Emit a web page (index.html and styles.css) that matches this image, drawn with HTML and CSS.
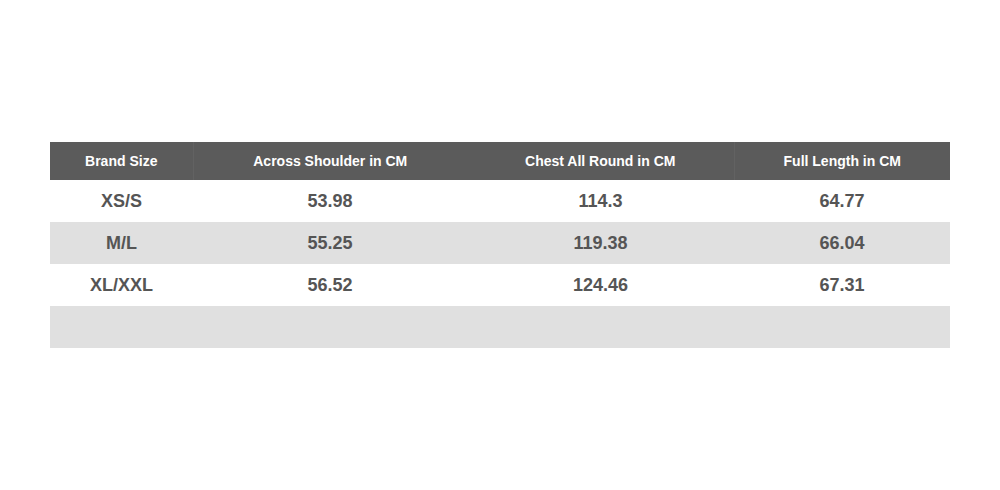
FILE: index.html
```html
<!DOCTYPE html>
<html>
<head>
<meta charset="utf-8">
<link rel="stylesheet" href="styles.css">
</head>
<body>
<div class="page">
<table class="size-table">
  <colgroup>
    <col class="c1"><col class="c2"><col class="c3"><col class="c4">
  </colgroup>
  <thead>
    <tr><th>Brand Size</th><th class="sep">Across Shoulder in CM</th><th>Chest All Round in CM</th><th class="sep">Full Length in CM</th></tr>
  </thead>
  <tbody>
    <tr><td>XS/S</td><td>53.98</td><td>114.3</td><td>64.77</td></tr>
    <tr class="alt"><td>M/L</td><td>55.25</td><td>119.38</td><td>66.04</td></tr>
    <tr><td>XL/XXL</td><td>56.52</td><td>124.46</td><td>67.31</td></tr>
    <tr class="alt"><td></td><td></td><td></td><td></td></tr>
  </tbody>
</table>
</div>
</body>
</html>
```
FILE: styles.css
```css
html, body {
  margin: 0;
  padding: 0;
  background: #ffffff;
}
.page {
  width: 1000px;
  height: 490px;
  padding-top: 142px;
  box-sizing: border-box;
  font-family: "Liberation Sans", Arial, sans-serif;
}
.size-table {
  margin-left: 50px;
  width: 900px;
  border-collapse: collapse;
  table-layout: fixed;
}
.c1 { width: 143px; }
.c2 { width: 274px; }
.c3 { width: 267px; }
.c4 { width: 216px; }
.size-table th {
  background: #5b5b5b;
  color: #ffffff;
  font-size: 14px;
  font-weight: bold;
  height: 38px;
  padding: 0;
  text-align: center;
}
.size-table th.sep {
  border-left: 1px solid #626262;
}
.size-table td {
  height: 41px;
  padding: 1px 0 0;
  text-align: center;
  font-size: 18px;
  font-weight: bold;
  color: #555555;
}
.size-table tr.alt td {
  background: #e0e0e0;
}
```
